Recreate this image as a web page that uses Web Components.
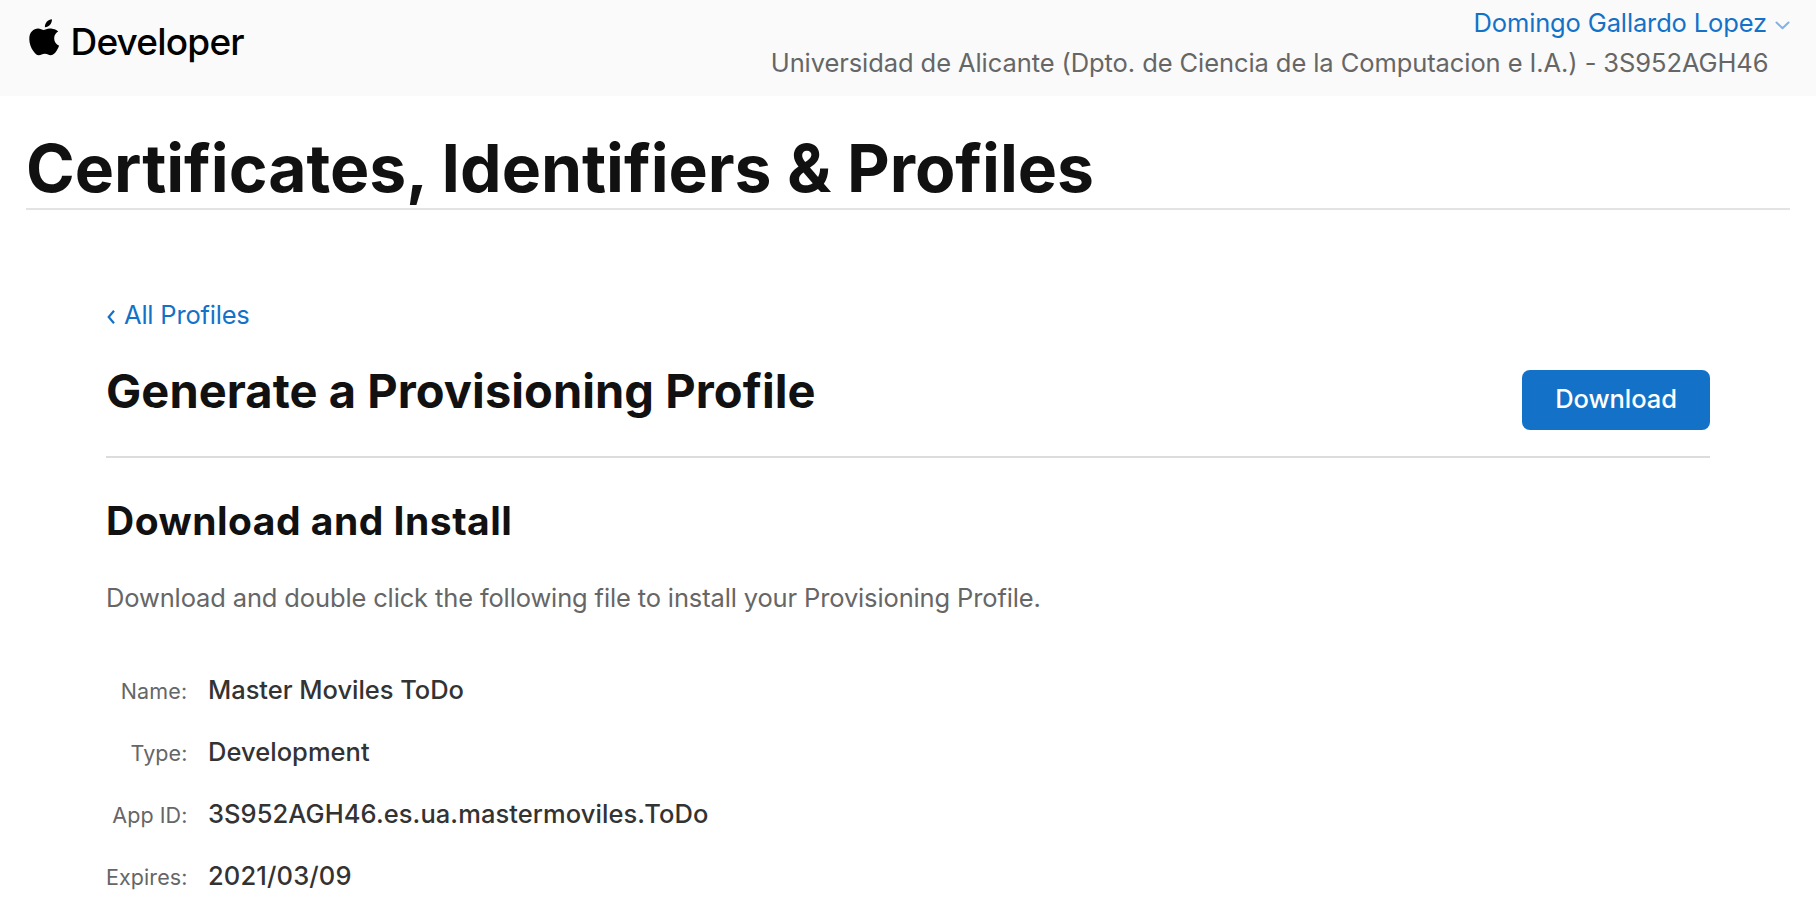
<!DOCTYPE html>
<html lang="en">
<head>
<meta charset="utf-8">
<title>Certificates, Identifiers &amp; Profiles</title>
<style>
html,body{margin:0;padding:0}
body{background:#fff;color:#111;font-family:Inter,"Liberation Sans",sans-serif;height:908px;overflow:hidden}
</style>
</head>
<body>
<dev-header>
  <span slot="user">Domingo Gallardo Lopez</span>
  <span slot="team">Universidad de Alicante (Dpto. de Ciencia de la Computacion e I.A.) - 3S952AGH46</span>
</dev-header>
<page-title>Certificates, Identifiers &amp; Profiles</page-title>
<profile-page>
  <back-link slot="back">All Profiles</back-link>
  <section-head slot="head">Generate a Provisioning Profile<action-button slot="action">Download</action-button></section-head>
  <span slot="subtitle">Download and Install</span>
  <span slot="intro">Download and double click the following file to install your Provisioning Profile.</span>
  <detail-row label="Name:" style="--ls:-.04px;--label-ls:.2px">Master Moviles ToDo</detail-row>
  <detail-row label="Type:" style="--ls:.04px">Development</detail-row>
  <detail-row label="App ID:" style="--ls:.074px">3S952AGH46.es.ua.mastermoviles.ToDo</detail-row>
  <detail-row label="Expires:" style="--ls:.13px">2021/03/09</detail-row>
</profile-page>
<script>
const define = (name, html) => {
  const t = document.createElement('template');
  t.innerHTML = html;
  customElements.define(name, class extends HTMLElement {
    constructor() {
      super();
      this.attachShadow({mode: 'open'}).append(t.content.cloneNode(true));
    }
    connectedCallback() {
      const label = this.shadowRoot.querySelector('.label');
      if (label) label.textContent = this.getAttribute('label');
    }
  });
};

define('apple-logo', `
<style>
:host{display:flex;align-items:flex-start;height:96px;color:#000}
svg{display:block;margin-top:19px;flex:none}
span{font-size:37px;font-weight:500;line-height:60px;margin:12px 0 0 11px;letter-spacing:-.81px;white-space:nowrap}
</style>
<svg width="31" height="37" viewBox="0 0 31 37" fill="#000">
<path d="M22.9.2c.2 2.1-.7 4.1-1.9 5.6-1.3 1.5-3.2 2.5-5.1 2.4-.2-2 .7-4.1 1.9-5.5C19.100 1.300 21.200.3 22.900.2z"/>
<path d="M29.200 12.600c-.3.200-4 2.200-4 6.800 0 5.300 4.700 7.200 4.900 7.200 0 .1-.8 2.600-2.500 5.100-1.600 2.200-3.200 4.500-5.700 4.500s-3.100-1.400-6-1.400c-2.800 0-3.800 1.500-6.100 1.500s-3.900-2.100-5.700-4.600C1.800 28.500.300 24.100.300 19.900.300 13.200 4.700 9.600 9 9.600c2.300 0 4.200 1.500 5.600 1.500 1.400 0 3.500-1.600 6.200-1.600 1 0 5.500.1 8.400 3.100z"/>
</svg><span>Developer</span>`);

define('dev-header', `
<style>
:host{display:flex;justify-content:space-between;box-sizing:border-box;height:96px;background:#fafafa;padding:0 26px 0 28.500px}
.account{display:flex;flex-direction:column;align-items:flex-end;padding-top:3px;font-size:25.5px;line-height:40px;white-space:nowrap}
.user{display:flex;align-items:center;color:#1372c8;letter-spacing:-.14px}
.user svg{margin:5px 0 0 8px}
.team{color:#666;letter-spacing:-.084px;margin-right:21.500px}
</style>
<apple-logo></apple-logo>
<div class="account">
<div class="user"><slot name="user"></slot><svg width="15" height="9" viewBox="0 0 15 9" fill="none" stroke="#7fb4e4" stroke-width="2" stroke-linecap="round" stroke-linejoin="round"><path d="M1.500 1.500 7.500 7.200 13.500 1.500"/></svg></div>
<div class="team"><slot name="team"></slot></div>
</div>`);

define('page-title', `
<style>
:host{display:block;margin:32px 26px 0;border-bottom:2px solid #e3e3e3}
h1{margin:0;font-size:66px;font-weight:700;line-height:80px;letter-spacing:-.05px;font-variant-ligatures:none}
</style>
<h1><slot></slot></h1>`);

define('back-link', `
<style>
:host{display:flex;align-items:center;color:#1372c8;font-size:25.5px;line-height:40px;letter-spacing:-.2px}
svg{margin:4px 9px 0 1px}
</style>
<svg width="8" height="14" viewBox="0 0 8 14" fill="none" stroke="#1372c8" stroke-width="2.200"><path d="M7 .7 1.700 7 7 13.300"/></svg><slot></slot>`);

define('action-button', `
<style>
:host{display:block}
button{display:flex;align-items:center;justify-content:center;width:188px;height:60px;padding:0 0 2px;border:0;border-radius:8px;background:#1372c8;color:#fff;font:500 25.5px/40px Inter,"Liberation Sans",sans-serif;letter-spacing:-.06px}
</style>
<button><slot></slot></button>`);

define('section-head', `
<style>
:host{display:flex;justify-content:space-between;box-sizing:border-box;height:97px;border-bottom:2px solid #dcdcdc}
h2{margin:0;font-size:47px;font-weight:700;line-height:60px;letter-spacing:.058px}
.action{padding-top:9px}
</style>
<h2><slot></slot></h2><div class="action"><slot name="action"></slot></div>`);

define('detail-row', `
<style>
:host{display:grid;grid-template-columns:81.5px 1fr;column-gap:20.5px;align-items:baseline;height:40px;line-height:40px}
.label{font-size:21.5px;color:#666;text-align:right;white-space:nowrap;letter-spacing:var(--label-ls,.08px)}
.value{font-size:25.5px;font-weight:500;color:#333;letter-spacing:var(--ls)}
</style>
<span class="label"></span><span class="value"><slot></slot></span>`);

define('profile-page', `
<style>
:host{display:block;margin:85px 106px 0}
.head{margin-top:26px}
h3{margin:38px 0 0;font-size:39px;font-weight:700;line-height:50px;letter-spacing:.5px}
p{margin:32px 0 0;font-size:25.5px;line-height:40px;color:#666;letter-spacing:-.139px}
.rows{display:flex;flex-direction:column;gap:22px;margin-top:52px}
</style>
<slot name="back"></slot>
<div class="head"><slot name="head"></slot></div>
<h3><slot name="subtitle"></slot></h3>
<p><slot name="intro"></slot></p>
<div class="rows"><slot></slot></div>`);
</script>
</body>
</html>
